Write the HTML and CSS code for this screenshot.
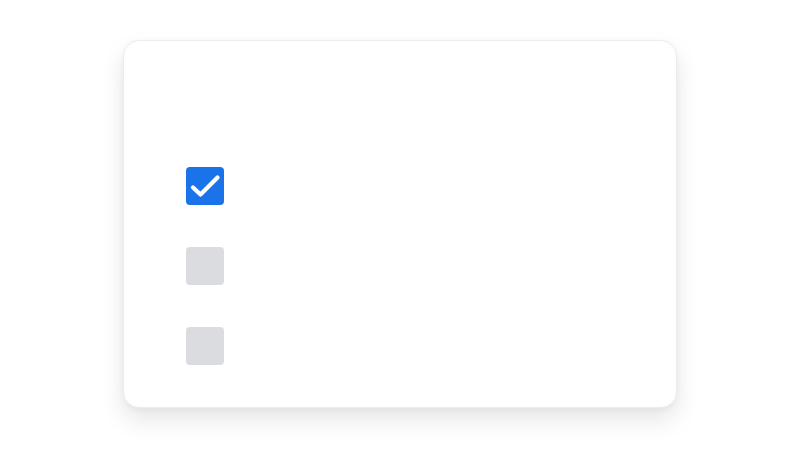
FILE: index.html
```html
<!DOCTYPE html>
<html>
<head>
<meta charset="utf-8">
<link rel="stylesheet" href="styles.css">
</head>
<body>
<div class="stage">
  <div class="card">
    <ul class="list">
      <li class="box checked">
        <svg viewBox="0 0 38 38" width="38" height="38"><path d="M7 20.5 L14.5 27.5 L31.5 10.5" fill="none" stroke="#fff" stroke-width="4.2" stroke-linecap="round" stroke-linejoin="round"/></svg>
      </li>
      <li class="box"></li>
      <li class="box"></li>
    </ul>
  </div>
</div>
</body>
</html>
```
FILE: styles.css
```css
html, body { margin: 0; padding: 0; background: #fff; }
.stage {
  width: 800px;
  height: 448px;
  display: flex;
  align-items: center;
  justify-content: center;
}
.card {
  box-sizing: border-box;
  width: 554px;
  height: 368px;
  background: #fff;
  border: 1px solid #ececec;
  border-radius: 16px;
  box-shadow: 0 12px 24px rgba(0,0,0,0.10), 0 2px 6px rgba(0,0,0,0.04);
  padding: 126px 0 0 62px;
}
.list {
  list-style: none;
  margin: 0;
  padding: 0;
  display: flex;
  flex-direction: column;
  gap: 42px;
}
.box {
  width: 38px;
  height: 38px;
  border-radius: 4px;
  background: #dadce0;
}
.box svg { display: block; }
.checked { background: #1a73e8; }
```
